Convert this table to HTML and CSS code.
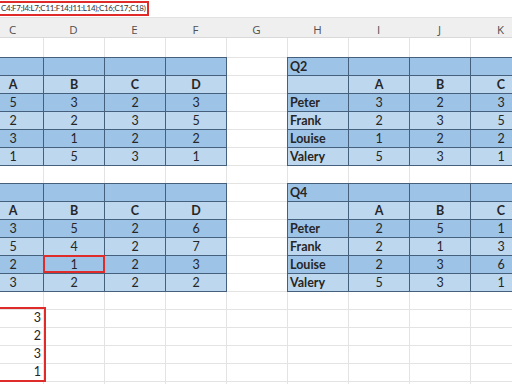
FILE: index.html
```html
<!DOCTYPE html>
<html>
<head>
<meta charset="utf-8">
<link rel="stylesheet" href="styles.css">
</head>
<body>
<div class="fbar"><div class="formula">C4:F7;I4:L7;C11:F14;I11:L14);C16;C17;C18)</div></div>
<div class="colhead">
  <span>C</span><span>D</span><span>E</span><span>F</span><span>G</span><span>H</span><span>I</span><span>J</span><span>K</span>
</div>
<div class="sheet">
  <div class="tbl t1">
    <div class="row d"><span></span><span></span><span></span><span></span></div>
    <div class="row l b"><span>A</span><span>B</span><span>C</span><span>D</span></div>
    <div class="row d"><span>5</span><span>3</span><span>2</span><span>3</span></div>
    <div class="row l"><span>2</span><span>2</span><span>3</span><span>5</span></div>
    <div class="row d"><span>3</span><span>1</span><span>2</span><span>2</span></div>
    <div class="row l"><span>1</span><span>5</span><span>3</span><span>1</span></div>
  </div>
  <div class="tbl t2">
    <div class="row d"><span class="nm">Q2</span><span></span><span></span><span></span></div>
    <div class="row l b"><span></span><span>A</span><span>B</span><span>C</span></div>
    <div class="row d"><span class="nm">Peter</span><span>3</span><span>2</span><span>3</span></div>
    <div class="row l"><span class="nm">Frank</span><span>2</span><span>3</span><span>5</span></div>
    <div class="row d"><span class="nm">Louise</span><span>1</span><span>2</span><span>2</span></div>
    <div class="row l"><span class="nm">Valery</span><span>5</span><span>3</span><span>1</span></div>
  </div>
  <div class="tbl t3">
    <div class="row d"><span></span><span></span><span></span><span></span></div>
    <div class="row l b"><span>A</span><span>B</span><span>C</span><span>D</span></div>
    <div class="row d"><span>3</span><span>5</span><span>2</span><span>6</span></div>
    <div class="row l"><span>5</span><span>4</span><span>2</span><span>7</span></div>
    <div class="row d"><span>2</span><span class="sel">1</span><span>2</span><span>3</span></div>
    <div class="row l"><span>3</span><span>2</span><span>2</span><span>2</span></div>
  </div>
  <div class="tbl t4">
    <div class="row d"><span class="nm">Q4</span><span></span><span></span><span></span></div>
    <div class="row l b"><span></span><span>A</span><span>B</span><span>C</span></div>
    <div class="row d"><span class="nm">Peter</span><span>2</span><span>5</span><span>1</span></div>
    <div class="row l"><span class="nm">Frank</span><span>2</span><span>1</span><span>3</span></div>
    <div class="row d"><span class="nm">Louise</span><span>2</span><span>3</span><span>6</span></div>
    <div class="row l"><span class="nm">Valery</span><span>5</span><span>3</span><span>1</span></div>
  </div>
  <div class="picks">
    <div>3</div><div>2</div><div>3</div><div>1</div>
  </div>
</div>
</body>
</html>
```
FILE: styles.css
```css
html, body {
  margin: 0;
  padding: 0;
}
body {
  width: 512px;
  height: 384px;
  overflow: hidden;
  background: #ffffff;
  font-family: Lato, "Liberation Sans", sans-serif;
  color: #262626;
}
.fbar {
  height: 16px;
  border-bottom: 1px solid #e2e2e2;
  background: #fff;
}
.formula {
  box-sizing: border-box;
  width: 149px;
  height: 15px;
  margin-top: 1px;
  border: 2px solid #e02b2b;
  border-left: none;
  padding-left: 1px;
  font-family: Lato, sans-serif;
  font-size: 8px;
  line-height: 11px;
  letter-spacing: -0.3px;
  color: #333;
  white-space: nowrap;
  overflow: hidden;
}
.colhead {
  display: flex;
  margin-left: -18px;
  height: 15px;
  padding-top: 4px;
  background: #efefef;
  border-bottom: 1px solid #d9d9d9;
}
.colhead span {
  flex: 0 0 61px;
  text-align: center;
  font-family: "Open Sans", sans-serif;
  font-size: 11.5px;
  line-height: 16px;
  color: #505050;
}
.sheet {
  margin-left: -18px;
  width: 549px;
  padding-top: 19px;
  display: grid;
  grid-template-columns: repeat(9, 61px);
  grid-template-rows: repeat(19, 18px);
  background-image:
    linear-gradient(to right, #e3e3e3 1px, transparent 1px),
    linear-gradient(to bottom, #e3e3e3 1px, transparent 1px);
  background-size: 61px 100%, 100% 18px;
  background-origin: border-box, content-box;
  background-clip: border-box, content-box;
}
.tbl {
  display: flex;
  flex-direction: column;
  border-right: 1px solid #44607c;
  border-bottom: 1px solid #44607c;
  margin: 0 -1px -1px 0;
}
.t1 { grid-column: 1 / 5; grid-row: 1 / 7; }
.t2 { grid-column: 6 / 10; grid-row: 1 / 7; }
.t3 { grid-column: 1 / 5; grid-row: 8 / 14; }
.t4 { grid-column: 6 / 10; grid-row: 8 / 14; }
.row {
  display: grid;
  grid-template-columns: repeat(4, 61px);
  height: 18px;
}
.row.d { background: #9dc3e6; }
.row.l { background: #bdd7ee; }
.row span {
  box-sizing: border-box;
  border-left: 1px solid #44607c;
  border-top: 1px solid #44607c;
  text-align: center;
  font-size: 12.5px;
  line-height: 17px;
  color: #262626;
}
.row.b span { font-weight: 700; }
.row span.nm {
  text-align: left;
  padding-left: 2px;
  font-weight: 700;
}
.sel { position: relative; }
.sel::after {
  content: "";
  position: absolute;
  top: -1px;
  left: -1px;
  right: -1px;
  bottom: 0;
  border: 2px solid #e02b2b;
}
.picks {
  grid-column: 1 / 2;
  grid-row: 15 / 19;
  position: relative;
  display: flex;
  flex-direction: column;
}
.picks div {
  height: 18px;
  line-height: 18px;
  text-align: right;
  padding-right: 2px;
  font-size: 12.5px;
  color: #262626;
}
.picks::after {
  content: "";
  position: absolute;
  top: -2px;
  left: -1px;
  right: -3px;
  bottom: -1px;
  border: 2px solid #e02b2b;
}
```
